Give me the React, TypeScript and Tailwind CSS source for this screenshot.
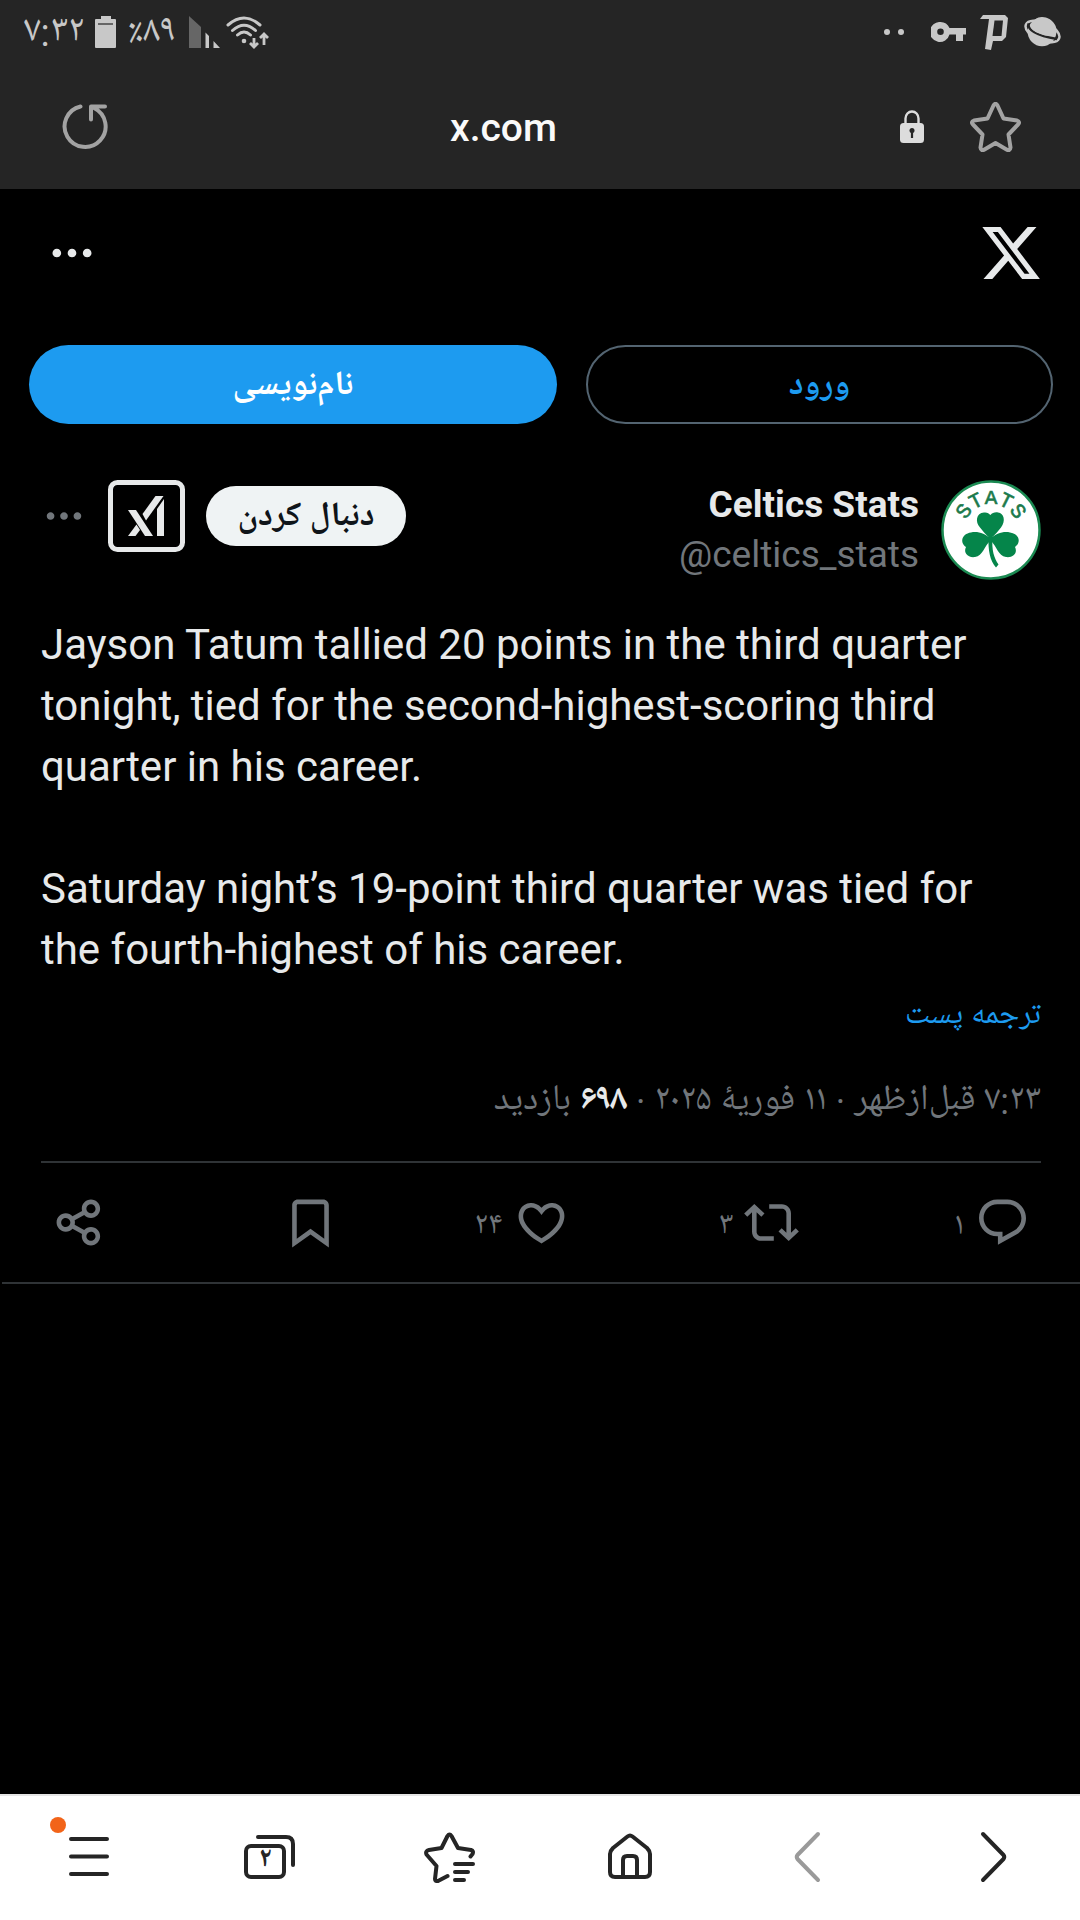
import type { ReactNode } from "react";

const persian = "font-[Roboto,'Noto_Naskh_Arabic_UI','Noto_Naskh_Arabic','Noto_Sans_Arabic','DejaVu_Sans',sans-serif]";

function XIcon({ d, className }: { d: string; className: string }) {
  return (
    <svg viewBox="0 0 24 24" className={className} fill="currentColor" aria-hidden="true">
      <path d={d} />
    </svg>
  );
}

const DOTS =
  "M3 12c0-1.1.9-2 2-2s2 .9 2 2-.9 2-2 2-2-.9-2-2zm9 2c1.1 0 2-.9 2-2s-.9-2-2-2-2 .9-2 2 .9 2 2 2zm7 0c1.1 0 2-.9 2-2s-.9-2-2-2-2 .9-2 2 .9 2 2 2z";
const X_LOGO =
  "M18.244 2.25h3.308l-7.227 8.26 8.502 11.24H16.17l-5.214-6.817L4.99 21.75H1.68l7.73-8.835L1.254 2.25H8.08l4.713 6.231zm-1.161 17.52h1.833L7.084 4.126H5.117z";
const REPLY =
  "M1.751 10c0-4.42 3.584-8 8.005-8h4.366c4.49 0 8.129 3.64 8.129 8.13 0 2.96-1.607 5.68-4.196 7.11l-8.054 4.46v-3.69h-.067c-4.49.1-8.183-3.51-8.183-8.01zm8.005-6c-3.317 0-6.005 2.69-6.005 6 0 3.37 2.77 6.08 6.138 6.01l.351-.01h1.761v2.3l5.087-2.81c1.951-1.08 3.163-3.13 3.163-5.36 0-3.39-2.744-6.13-6.129-6.13H9.756z";
const REPOST =
  "M4.5 3.88l4.432 4.14-1.364 1.46L5.5 7.55V16c0 1.1.896 2 2 2H13v2H7.5c-2.209 0-4-1.79-4-4V7.55L1.432 9.48.068 8.02 4.5 3.88zM16.5 6H11V4h5.5c2.209 0 4 1.79 4 4v8.45l2.068-1.93 1.364 1.46-4.432 4.14-4.432-4.14 1.364-1.46 2.068 1.93V8c0-1.1-.896-2-2-2z";
const LIKE =
  "M16.697 5.5c-1.222-.06-2.679.51-3.89 2.16l-.805 1.09-.806-1.09C9.984 6.01 8.526 5.44 7.304 5.5c-1.243.07-2.349.78-2.91 1.91-.552 1.12-.633 2.78.479 4.82 1.074 1.97 3.257 4.27 7.129 6.61 3.87-2.34 6.052-4.64 7.126-6.61 1.111-2.04 1.03-3.7.477-4.82-.561-1.13-1.666-1.84-2.908-1.91zm4.187 7.69c-1.351 2.48-4.001 5.12-8.379 7.67l-.503.3-.504-.3c-4.379-2.55-7.029-5.19-8.382-7.67-1.36-2.5-1.41-4.86-.514-6.67.887-1.79 2.647-2.91 4.601-3.01 1.651-.09 3.368.56 4.798 2.01 1.429-1.45 3.146-2.1 4.796-2.01 1.954.1 3.714 1.22 4.601 3.01.896 1.81.846 4.17-.514 6.67z";
const BOOKMARK =
  "M4 4.5C4 3.12 5.119 2 6.5 2h11C18.881 2 20 3.12 20 4.5v18.44l-8-5.71-8 5.71V4.5zM6.5 4c-.276 0-.5.22-.5.5v14.56l6-4.29 6 4.29V4.5c0-.28-.224-.5-.5-.5h-11z";
const SHARE =
  "M17 4c-1.1 0-2 .9-2 2 0 .33.08.65.22.92C15.56 7.56 16.23 8 17 8c1.1 0 2-.9 2-2s-.9-2-2-2zm-4 2c0-2.21 1.79-4 4-4s4 1.79 4 4-1.79 4-4 4c-1.17 0-2.22-.5-2.95-1.3l-4.16 2.37c.07.3.11.61.11.93s-.04.63-.11.93l4.16 2.37c.73-.8 1.78-1.3 2.95-1.3 2.21 0 4 1.79 4 4s-1.79 4-4 4-4-1.79-4-4c0-.32.04-.63.11-.93L8.95 14.7C8.22 15.5 7.17 16 6 16c-2.21 0-4-1.79-4-4s1.79-4 4-4c1.17 0 2.22.5 2.95 1.3l4.16-2.37c-.07-.3-.11-.61-.11-.93zm-7 4c-1.1 0-2 .9-2 2s.9 2 2 2c.77 0 1.44-.44 1.78-1.08.14-.27.22-.59.22-.92s-.08-.65-.22-.92C7.44 10.44 6.77 10 6 10zm11 6c-.77 0-1.44.44-1.78 1.08-.14.27-.22.59-.22.92 0 1.1.9 2 2 2s2-.9 2-2-.9-2-2-2z";

function StatusBar() {
  return (
    <div className="flex h-16 items-center justify-between pl-6 pr-[19px] text-[#c8c8c8]">
      <div className="flex items-center">
        <span className={`${persian} w-[71px] pt-[2px] text-[38px] leading-8`}>۷:۳۲</span>
        <svg viewBox="0 0 21 32" className="h-8 w-[21px]" fill="currentColor" aria-hidden="true">
          <path d="M6 0h10v3h4q1 0 1 1v27q0 1-1 1H1q-1 0-1-1V4q0-1 1-1h5z" />
          <path d="M3 8h15" stroke="#666" strokeWidth="2" />
        </svg>
        <span className={`${persian} ml-3 w-[61px] pt-[2px] text-[38px] leading-8`} dir="ltr">٪۸۹</span>
        <svg viewBox="0 0 31 32" className="h-8 w-[31px]" fill="currentColor" aria-hidden="true">
          <path d="M0 0l12 11v21H0z" fill="#666" />
          <path d="M16.500 16.500l3.500 3.500v12h-3.500zM24.500 25l6.500 7h-6.500z" />
        </svg>
        <svg viewBox="0 0 43 33" className="ml-[6px] h-[33px] w-[43px]" fill="none" stroke="currentColor" strokeWidth="3" strokeLinecap="round" aria-hidden="true">
          <path d="M2 9Q18-5 34 9M6.500 14.500Q18 4 29.500 14.500M11.500 19Q18 13 24.500 19" />
          <circle cx="18" cy="25" r="2.300" fill="currentColor" stroke="none" />
          <path d="M28 22v8m-4-3l4 4 4-4M38 29v-9m-4 2l4-4 4 4" strokeWidth="2.800" strokeLinecap="butt" />
        </svg>
      </div>
      <div className="flex items-center">
        <svg viewBox="0 0 20 6" className="mr-[27px] h-[6px] w-5" fill="currentColor" aria-hidden="true">
          <circle cx="3" cy="3" r="3" />
          <circle cx="17" cy="3" r="3" />
        </svg>
        <svg viewBox="0 0 35 20" className="mr-[14px] h-5 w-[35px]" fill="currentColor" aria-hidden="true">
          <path fillRule="evenodd" d="M9.500 0a10 10 0 0 1 9 6H35v6.500V19h-3v0h-7v-6.500h-6.500A10 10 0 1 1 9.500 0zm0 6.500a3.300 3.300 0 1 0 0 6.600 3.300 3.300 0 0 0 0-6.600z" />
          <path d="M32 12.500h3.500V19.500H32z" fill="#252525" />
        </svg>
        <svg viewBox="0 0 28 35" className="mr-4 h-[35px] w-7" aria-hidden="true">
          <path d="M0 4L3 0h22l3 3-2 19-4 4h-9l-2 9-6-1L9 4z" fill="currentColor" />
          <path d="M14.500 5.500H23L21.500 21H12.500z" fill="#252525" />
        </svg>
        <svg viewBox="0 0 37 30" className="h-[30px] w-[37px]" aria-hidden="true">
          <circle cx="18" cy="15" r="14.300" fill="#c8c8c8" />
          <ellipse cx="18.500" cy="14.500" rx="18" ry="9" transform="rotate(23 18.500 14.500)" fill="none" stroke="#c8c8c8" strokeWidth="2.500" />
          <path d="M4.500 6.500Q3 17 33 22" fill="none" stroke="#252525" strokeWidth="2.500" />
          <path d="M7 8C4 12 17 20 31 19C36 12 29 0 18 0C13 0 9 3 7 8z" fill="#c8c8c8" />
        </svg>
      </div>
    </div>
  );
}

function BrowserBar() {
  return (
    <div className="flex h-[125px] items-center pl-[60px] pr-[59px]">
      <button type="button" aria-label="Reload">
        <svg viewBox="0 0 51 51" className="h-[51px] w-[51px]" fill="none" stroke="#a3a3a3" strokeWidth="4" strokeLinecap="round" strokeLinejoin="round">
          <path d="M20.500 5.500A20.500 20.500 0 1 0 34 7M45 5.500H31V18.500" />
        </svg>
      </button>
      <div className="flex-1 pr-1 pt-[2px] text-center text-[39px] font-medium leading-10 text-[#fafafa]">x.com</div>
      <svg viewBox="0 0 24 33" className="h-[33px] w-6" aria-hidden="true">
        <path d="M5.500 14V8.500a6.500 7 0 0 1 13 0V14" fill="none" stroke="#dcdcdc" strokeWidth="2.400" />
        <rect y="13" width="24" height="20" rx="3.500" fill="#dcdcdc" />
        <circle cx="12" cy="20.500" r="2.500" fill="#252525" />
        <path d="M12 21v7" stroke="#252525" strokeWidth="2.200" />
      </svg>
      <button type="button" aria-label="Add bookmark" className="ml-[46px]">
        <svg viewBox="0 0 51 50" className="h-[50px] w-[51px]" fill="none" stroke="#a3a3a3" strokeWidth="4" strokeLinejoin="round">
          <path d="M23.500 3.500Q25.500 0 27.500 3.500L33.500 16.500L47 18.500Q50.500 20 48 22.500L38.500 32.500L40.500 45.500Q40 49.500 36.500 47.500L25.500 41L14.500 47.500Q11 49.500 10.500 45.500L12.500 32.500L3 22.500Q.500 20 4 18.500L17.500 16.500z" />
        </svg>
      </button>
    </div>
  );
}

function Avatar() {
  return (
    <svg viewBox="0 0 100 100" className="h-[100px] w-[100px] shrink-0" role="img" aria-label="Celtics Stats">
      <defs>
        <path id="arc" d="M23 51A27 27 0 0 1 77 51" />
      </defs>
      <circle cx="50" cy="50" r="48.500" fill="#fff" stroke="#1b8a52" strokeWidth="2.500" />
      <text fill="#1b7a4c" fontFamily="Liberation Mono" fontWeight="400" fontSize="21" stroke="#1b7a4c" strokeWidth="0.600" textAnchor="middle">
        <textPath href="#arc" startOffset="50%">STATS</textPath>
      </text>
      <g fill="#05854a">
        <path d="M48.500 58C45 55 42 51 39 47.500C34 42 35 33 43 32.500C46 32 48 33.500 49.500 35C51 33 54 32 57 32.500C63 33 65 41 60 47.500C57 51 54 55 50.500 58z" />
        <path d="M50 59C44 53 36 51 30 52.500C20 54 19 63 25 67C22 73 27 78 34 77C42 76 43 66 50 60z" />
        <path d="M49 59C55 53 63 51 69 52.500C79 54 80 63 74 67C77 73 72 78 65 77C57 76 56 66 49 60z" />
        <path d="M47.500 57h4C50.500 70 53 78 57.500 84.500L55 87.500C49 81 47 70 47.500 57z" />
      </g>
    </svg>
  );
}

function GrokMark() {
  return (
    <svg viewBox="0 0 77 72" className="h-[72px] w-[77px]" aria-hidden="true">
      <rect x="2.500" y="2.500" width="72" height="67" rx="7" fill="none" stroke="#e7e9ea" strokeWidth="5" />
      <g fill="#e7e9ea">
        <path d="M56 19v37h-7V29z" />
        <path d="M47.500 16H55.500L38 40.500L34.500 34z" />
        <path d="M20 30h8L45 56h-8z" />
        <path d="M28.500 44.500L32 50L27.500 56H20z" />
      </g>
    </svg>
  );
}

function Action({ label, d, count, last }: { label: string; d: string; count?: string; last?: boolean }) {
  return (
    <div className={last ? "flex" : "flex flex-1 basis-0"}>
      <button type="button" aria-label={label} className="flex items-center gap-[11px]">
        <XIcon d={d} className="h-[55px] w-[55px]" />
        {count && <span className={`${persian} pt-2 text-[32px] leading-8`}>{count}</span>}
      </button>
    </div>
  );
}

function Post() {
  return (
    <article className="pl-[41px] pr-[39px] pt-[56px]">
      <header className="flex items-start justify-between">
        <div className="flex items-center">
          <button type="button" aria-label="More" className="text-[#71767b]">
            <XIcon d={DOTS} className="h-[46px] w-[46px]" />
          </button>
          <button type="button" aria-label="Grok" className="ml-[21px]">
            <GrokMark />
          </button>
          <button type="button" dir="rtl" className={`${persian} ml-[21px] h-[60px] w-[200px] rounded-full bg-[#eff3f4] pt-1 text-[34px] font-bold leading-10 text-[#0f1419]`}>
            دنبال کردن
          </button>
        </div>
        <div className="flex items-start gap-[22px]">
          <div className="text-right">
            <div className="mt-1 text-[37px] font-bold leading-[42px] text-[#e7e9ea]">Celtics Stats</div>
            <div className="mt-2 text-[37px] leading-[42px] text-[#71767b]">@celtics_stats</div>
          </div>
          <Avatar />
        </div>
      </header>
      <p className="mt-[34px] whitespace-pre-line text-[42px] leading-[61px] text-[#e7e9ea]">
        {"Jayson Tatum tallied 20 points in the third quarter tonight, tied for the second-highest-scoring third quarter in his career.\n\nSaturday night’s 19-point third quarter was tied for the fourth-highest of his career."}
      </p>
      <div dir="rtl" className={persian}>
        <a href="#translate" className="mt-4 block text-[32px] leading-10 text-[#1d9bf0]">ترجمه پست</a>
        <p className="mt-[42px] text-[36px] leading-[48px] text-[#71767b]">
          ۷:۲۳ قبل‌ازظهر · ۱۱ فوریهٔ ۲۰۲۵ · <b className="text-[#e7e9ea]">۶۹۸</b> بازدید
        </p>
      </div>
      <div dir="rtl" className="mt-[35px] flex h-[121px] items-center border-t-2 border-[#2f3336] px-[11px] text-[#71767b]">
        <Action label="Reply" d={REPLY} count="۱" />
        <Action label="Repost" d={REPOST} count="۳" />
        <Action label="Like" d={LIKE} count="۲۴" />
        <Action label="Bookmark" d={BOOKMARK} />
        <Action label="Share" d={SHARE} last />
      </div>
    </article>
  );
}

function NavButton({ label, children }: { label: string; children: ReactNode }) {
  return (
    <button type="button" aria-label={label} className="relative flex h-[60px] w-[60px] items-center justify-center">
      {children}
    </button>
  );
}

const line = "h-[52px] w-[60px] fill-none stroke-[#252525] stroke-4 [stroke-linecap:round] [stroke-linejoin:round]";

function BottomNav() {
  return (
    <nav className="mt-auto flex h-[126px] items-center justify-between border-t-2 border-[#e5e5e5] bg-white px-[60px] pb-[2px]">
      <NavButton label="Menu">
        <svg viewBox="0 0 60 52" className={line}>
          <path d="M11 8h36M11 25.500h36M11 43h36" />
        </svg>
        <span className="absolute -left-[10px] -top-[10px] h-4 w-4 rounded-full bg-[#f26419]" />
      </NavButton>
      <NavButton label="Tabs">
        <svg viewBox="0 0 60 52" className={line}>
          <rect x="6" y="15" width="38" height="31" rx="5" />
          <path d="M18 6h28q7 0 7 7v21" />
        </svg>
        <span className={`${persian} absolute left-[17px] top-[18px] w-4 text-center text-[28px] font-bold leading-8 text-[#252525]`}>۲</span>
      </NavButton>
      <NavButton label="Favorites">
        <svg viewBox="0 0 60 52" className={line}>
          <path d="M27.500 45L18 50Q15 50.500 15 48L16.500 35L6.500 23.500Q5 20 9 19L21.500 17L27.500 5Q29.500 2 31.500 5L38 17L51 19Q54 20 52.500 23L50.500 25.500" />
          <path d="M35 33h18M35 41h13M35 49h9" />
        </svg>
      </NavButton>
      <NavButton label="Home">
        <svg viewBox="0 0 60 52" className={line}>
          <path d="M27.500 5.500Q30 3.500 32.500 5.500L47 17Q50 20 50 23V41Q50 46 45 46H15Q10 46 10 41V23Q10 20 13 17z" />
          <path d="M23 45V29q0-4 4-4h6q4 0 4 4v16" />
        </svg>
      </NavButton>
      <NavButton label="Back">
        <svg viewBox="0 0 60 52" className="h-[52px] w-[60px] fill-none stroke-[#9a9a9a] stroke-4 [stroke-linecap:round] [stroke-linejoin:round]">
          <path d="M38 3L17.500 24Q16 26 17.500 28L38 49" />
        </svg>
      </NavButton>
      <NavButton label="Forward">
        <svg viewBox="0 0 60 52" className={line}>
          <path d="M23 3L43.500 24Q45 26 43.500 28L23 49" />
        </svg>
      </NavButton>
    </nav>
  );
}

export default function App() {
  return (
    <div lang="fa" className="flex min-h-screen flex-col bg-black font-[Roboto,sans-serif]">
      <div className="bg-[#252525]">
        <StatusBar />
        <BrowserBar />
      </div>
      <main>
        <div className="flex h-[128px] items-center justify-between pl-[46px] pr-[37px] text-[#e7e9ea]">
          <button type="button" aria-label="More options">
            <XIcon d={DOTS} className="h-[52px] w-[52px]" />
          </button>
          <a href="#home" aria-label="X">
            <XIcon d={X_LOGO} className="h-16 w-16" />
          </a>
        </div>
        <div dir="rtl" className={`${persian} flex gap-[29px] pl-[29px] pr-[27px] pt-7 text-[34px] font-bold leading-10`}>
          <button type="button" className="h-[79px] grow-[463] basis-0 rounded-full border-2 border-[#536471] px-0 pt-1 text-[#1d9bf0]">ورود</button>
          <button type="button" className="h-[79px] grow-[528] basis-0 rounded-full bg-[#1d9bf0] px-0 pt-1 text-white">نام‌نویسی</button>
        </div>
        <Post />
        <hr className="ml-[2px] border-t-2 border-[#2f3336]" />
      </main>
      <BottomNav />
    </div>
  );
}
